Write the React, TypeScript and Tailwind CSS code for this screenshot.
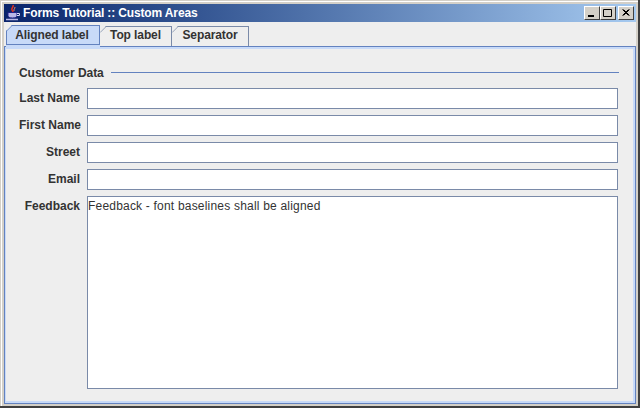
import React from 'react';

const font = "font-['Liberation_Sans',Arial,sans-serif]";

function JavaIcon() {
  return (
    <svg width="16" height="16" viewBox="0 0 16 16" className="shrink-0">
      <path d="M8 0c1 2-2 3-1 5 .5 1 1 1.500 1 2" stroke="#e03020" strokeWidth="1.500" fill="none" />
      <path d="M10 2c0 2-1.500 2-1 4" stroke="#f08060" strokeWidth="1" fill="none" />
      <path d="M3 7.500h9v3c0 1.500-1.500 2.500-4.500 2.500S3 12 3 10.500z" fill="#b8b8e8" stroke="#20208a" strokeWidth="1" />
      <path d="M12 8.500h2.500v2H12" stroke="#d8d8f8" strokeWidth="1" fill="none" />
      <path d="M1 14.500h12" stroke="#b8b8e8" strokeWidth="1.500" />
    </svg>
  );
}

function WinButton({ kind, className = '' }: { kind: 'min' | 'max' | 'close'; className?: string }) {
  return (
    <div
      className={`w-4 h-[14px] bg-[#d4d0c8] border border-t-white border-l-white border-r-[#404040] border-b-[#404040] flex items-center justify-center ${className}`}
    >
      <svg width="10" height="10" viewBox="0 0 10 10">
        {kind === 'min' && <rect x="1" y="7" width="6" height="2" fill="#000" />}
        {kind === 'max' && <path d="M.5 1.500h8v7h-8zM1 1.500h7" stroke="#000" fill="none" />}
        {kind === 'close' && <path d="M1.500 1.500l6 6M2.500 1.500l6 6M7.500 1.500l-6 6M8.500 1.500l-6 6" stroke="#000" fill="none" />}
      </svg>
    </div>
  );
}

function Tab({ label, active, width }: { label: string; active?: boolean; width: string }) {
  if (active) {
    return (
      <div className={`relative z-10 -mb-[3px] h-[24px] ${width} flex flex-col bg-[#c8daf8] border-t border-[#6382bf] [clip-path:polygon(6px_0,100%_0,100%_100%,0_100%,0_6px)]`}>
        <svg width="7" height="7" viewBox="0 0 7 7" className="absolute left-0 -top-px">
          <path d="M0 6.500L6.500 0" stroke="#6382bf" fill="none" />
        </svg>
        <div className="h-[19px] flex items-center justify-center border-x border-b border-[#6382bf] pr-[2px] whitespace-nowrap">
          {label}
        </div>
      </div>
    );
  }
  return (
    <div className={`relative h-5 ${width} flex items-center justify-center pb-[3px] border-t border-r border-[#7a8aa8] whitespace-nowrap [clip-path:polygon(6px_0,100%_0,100%_100%,0_100%,0_6px)]`}>
      <svg width="7" height="7" viewBox="0 0 7 7" className="absolute left-0 -top-px">
        <path d="M0 6.500L6.500 0" stroke="#7a8aa8" fill="none" />
      </svg>
      {label}
    </div>
  );
}

function Field({ label }: { label: string }) {
  return (
    <>
      <span className="text-right font-bold leading-[21px] whitespace-nowrap">{label}</span>
      <div className="h-[21px] bg-white border border-[#7a8aa8]" />
    </>
  );
}

export default function App() {
  return (
    <div className={`${font} w-[640px] h-[408px] flex flex-col bg-[#d4d0c8] pl-px pt-px border-r-2 border-b-2 border-r-[#404040] border-b-[#404040] overflow-hidden`}>
      <div className="flex-1 flex flex-col min-h-0 p-[2px] border-l border-t border-white">
        {/* Title bar */}
        <div className="h-[18px] flex items-center gap-[2px] pl-px pr-[2px] bg-gradient-to-r from-[#0a246a] to-[#a6caf0] text-white text-[12px] font-bold">
          <JavaIcon />
          <span className="tracking-[-0.14px]">Forms Tutorial :: Custom Areas</span>
          <div className="ml-auto flex">
            <WinButton kind="min" />
            <WinButton kind="max" />
            <WinButton kind="close" className="ml-[2px]" />
          </div>
        </div>

        {/* Content */}
        <div className="flex-1 flex flex-col min-h-0 bg-[#eeeeee] text-[12px] text-[#333333]">
          <div className="h-6 flex items-end pl-[2px] font-bold tracking-[-0.1px]">
            <Tab label="Aligned label" active width="w-[94px]" />
            <Tab label="Top label" width="w-[72px]" />
            <Tab label="Separator" width="w-[77px]" />
          </div>
          <div className="flex-1 min-h-0 flex flex-col border border-[#6382bf]">
            <div className="flex-1 min-h-0 flex flex-col border-2 border-l border-[#c8daf8] pl-[13px] pr-[14px] pt-4 pb-[12px]">
              <div className="h-[15px] flex items-center gap-[7px] font-bold mb-2">
                <span className="tracking-[-0.05px]">Customer Data</span>
                <div className="flex-1 h-px bg-[#6382bf]" />
              </div>
              <div className="flex-1 min-h-0 grid grid-cols-[61px_1fr] grid-rows-[21px_21px_21px_21px_1fr] gap-x-[7px] gap-y-[6px] pr-px">
                <Field label="Last Name" />
                <Field label="First Name" />
                <Field label="Street" />
                <Field label="Email" />
                <span className="text-right font-bold leading-[21px]">Feedback</span>
                <div className="bg-white border border-[#7a8aa8] leading-[18px] tracking-[0.2px]">
                  Feedback - font baselines shall be aligned
                </div>
              </div>
            </div>
          </div>
        </div>
      </div>
    </div>
  );
}
